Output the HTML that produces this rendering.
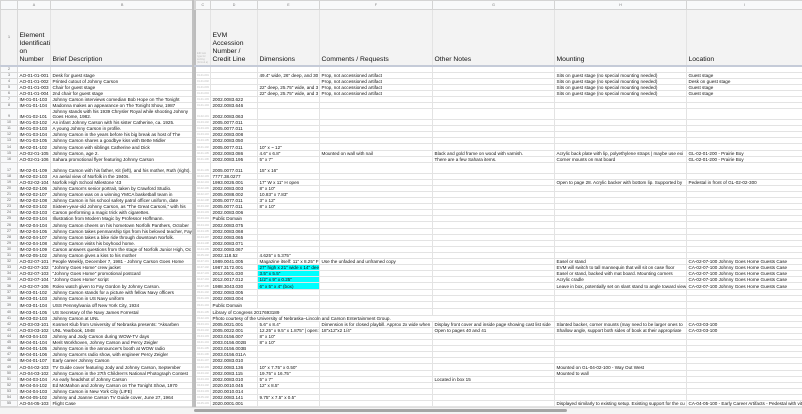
<!DOCTYPE html>
<html><head><meta charset="utf-8"><style>
html,body{margin:0;padding:0;background:#fff;width:802px;height:413px;overflow:hidden;font-family:"Liberation Sans",Arial,sans-serif;}
table{border-collapse:collapse;table-layout:fixed;width:802px;position:absolute;left:0;top:0;}
td{border:1px solid #e3e3e3;padding:0 1.5px;white-space:nowrap;overflow:hidden;font-size:4.6px;line-height:5px;vertical-align:bottom;color:#111;}
td.n{background:#f8f9fa;color:#666;text-align:center;font-size:3.6px;border-color:#d8d8d8;}
td.b{border-right:2px solid #bcbcbc;}
td.c{color:#bbb;font-size:2.6px;}
tr.L td{background:#f8f9fa;color:#777;text-align:center;font-size:3.6px;border-color:#d4d4d4;vertical-align:middle;}
tr.H td{background:#f3f3f3;font-size:6.8px;line-height:8px;white-space:normal;padding-bottom:1px;border-bottom:2px solid #c5cbd8;}
tr.H td.c{font-size:2.6px;line-height:3px;color:#bbb;}
tr.H td.n{font-size:3.6px;vertical-align:middle;}
tr{height:6.1px;}
.w{white-space:normal;}
.cy{background:#00ffff;}
#bar{position:absolute;left:0;top:407px;width:802px;height:6px;background:#f4f4f4;border-top:1px solid #ddd;}
#thumb{position:absolute;left:194px;top:409px;width:373px;height:3px;background:#a5a5a5;border-radius:2px;}
#fz{position:absolute;left:192px;top:0;width:2px;height:413px;background:#c0c0c0;}
</style></head><body>
<table>
<colgroup><col style="width:17px"><col style="width:33px"><col style="width:144px"><col style="width:16px"><col style="width:47px"><col style="width:62px"><col style="width:113px"><col style="width:122px"><col style="width:132px"><col style="width:116px"></colgroup>
<tr class="L" style="height:9px"><td></td><td>A</td><td class="b">B</td><td>C</td><td>D</td><td>E</td><td>F</td><td>G</td><td>H</td><td>I</td></tr>
<tr class="H" style="height:56px"><td class="n">1</td><td>Element Identificati on Number</td><td class="b">Brief Description</td><td class="c">EID w/o type for sorting (formul a)</td><td>EVM Accession Number / Credit Line</td><td>Dimensions</td><td>Comments / Requests</td><td>Other Notes</td><td>Mounting</td><td>Location</td></tr>
<tr style="height:5px"><td class="n">2</td><td></td><td class="b"></td><td></td><td></td><td></td><td></td><td></td><td></td><td></td></tr>
<tr><td class="n">3</td><td>AO-01-01-001</td><td class="b">Desk for guest stage</td><td class="c">01-01-001</td><td></td><td>49.4" wide, 26" deep, and 30</td><td>Prop, not accessioned artifact</td><td></td><td>Sits on guest stage (no special mounting needed)</td><td>Guest stage</td></tr>
<tr><td class="n">4</td><td>AO-01-01-002</td><td class="b">Printed cutout of Johnny Carson</td><td class="c">01-01-002</td><td></td><td></td><td>Prop, not accessioned artifact</td><td></td><td>Sits on guest stage (no special mounting needed)</td><td>Desk on guest stage</td></tr>
<tr><td class="n">5</td><td>AO-01-01-003</td><td class="b">Chair for guest stage</td><td class="c">01-01-003</td><td></td><td>22" deep, 25.75" wide, and 3</td><td>Prop, not accessioned artifact</td><td></td><td>Sits on guest stage (no special mounting needed)</td><td>Guest stage</td></tr>
<tr><td class="n">6</td><td>AO-01-01-004</td><td class="b">2nd chair for guest stage</td><td class="c">01-01-004</td><td></td><td>22" deep, 25.75" wide, and 3</td><td>Prop, not accessioned artifact</td><td></td><td>Sits on guest stage (no special mounting needed)</td><td>Guest stage</td></tr>
<tr><td class="n">7</td><td>IM-01-01-103</td><td class="b">Johnny Carson interviews comedian Bob Hope on The Tonight</td><td class="c">01-01-103</td><td>2002.0083.622</td><td></td><td></td><td></td><td></td><td></td></tr>
<tr><td class="n">8</td><td>IM-01-01-104</td><td class="b">Madonna makes an appearance on The Tonight Show, 1987</td><td class="c">01-01-104</td><td>2002.0083.646</td><td></td><td></td><td></td><td></td><td></td></tr>
<tr style="height:11px"><td class="n">9</td><td>IM-01-02-101</td><td class="b w">Johnny stands with his 1939 Chrysler Royal while shooting Johnny Goes Home, 1982.</td><td class="c">01-02-101</td><td>2002.0083.063</td><td></td><td></td><td></td><td></td><td></td></tr>
<tr><td class="n">10</td><td>IM-01-03-102</td><td class="b">An infant Johnny Carson with his sister Catherine, ca. 1925.</td><td class="c">01-03-102</td><td>2005.0077.011</td><td></td><td></td><td></td><td></td><td></td></tr>
<tr><td class="n">11</td><td>IM-01-03-103</td><td class="b">A young Johnny Carson in profile.</td><td class="c">01-03-103</td><td>2005.0077.011</td><td></td><td></td><td></td><td></td><td></td></tr>
<tr><td class="n">12</td><td>IM-01-03-104</td><td class="b">Johnny Carson in the years before his big break as host of The</td><td class="c">01-03-104</td><td>2002.0083.008</td><td></td><td></td><td></td><td></td><td></td></tr>
<tr><td class="n">13</td><td>IM-01-03-105</td><td class="b">Johnny Carson shares a goodbye kiss with Bette Midler</td><td class="c">01-03-105</td><td>2002.0083.050</td><td></td><td></td><td></td><td></td><td></td></tr>
<tr><td class="n">14</td><td>IM-02-01-102</td><td class="b">Johnny Carson with siblings Catherine and Dick</td><td class="c">02-01-102</td><td>2005.0077.011</td><td>10" x ~ 12"</td><td></td><td></td><td></td><td></td></tr>
<tr><td class="n">15</td><td>AO-02-01-105</td><td class="b">Johnny Carson, age 2.</td><td class="c">02-01-105</td><td>2002.0083.086</td><td>4.6" x 6.8"</td><td>Mounted on wall with nail</td><td>Black and gold frame on wood with varnish.</td><td>Acrylic back plate with lip, polyethylene straps | maybe use exi</td><td>GL-02-01-200 - Prairie Boy</td></tr>
<tr><td class="n">16</td><td>AO-02-01-106</td><td class="b">Sahara promotional flyer featuring Johnny Carson</td><td class="c">02-01-106</td><td>2002.0083.195</td><td>5" x 7"</td><td></td><td>There are a few Sahara items.</td><td>Corner mounts on mat board</td><td>GL-02-01-200 - Prairie Boy</td></tr>
<tr style="height:11px"><td class="n">17</td><td>IM-02-01-109</td><td class="b w">Johnny Carson with his father, Kit (left), and his mother, Ruth (right).</td><td class="c">02-01-109</td><td>2005.0077.011</td><td>15" x 16"</td><td></td><td></td><td></td><td></td></tr>
<tr><td class="n">18</td><td>IM-02-02-103</td><td class="b">An aerial view of Norfolk in the 1940s.</td><td class="c">02-02-103</td><td>7777.38.0277</td><td></td><td></td><td></td><td></td><td></td></tr>
<tr><td class="n">19</td><td>AO-02-02-104</td><td class="b">Norfolk High School Milestone '43</td><td class="c">02-02-104</td><td>1993.0026.001</td><td>17" W x 11" H open</td><td></td><td></td><td>Open to page 28. Acrylic backer with bottom lip. Supported by</td><td>Pedestal in front of GL-02-02-300</td></tr>
<tr><td class="n">20</td><td>IM-02-02-106</td><td class="b">Johnny Carson's senior portrait, taken by Crawford Studio.</td><td class="c">02-02-106</td><td>2002.0083.003</td><td>8" x 10"</td><td></td><td></td><td></td><td></td></tr>
<tr><td class="n">21</td><td>IM-02-02-107</td><td class="b">Johnny Carson was on a winning YMCA basketball team in</td><td class="c">02-02-107</td><td>2005.0088.002</td><td>10.83" x 7.83"</td><td></td><td></td><td></td><td></td></tr>
<tr><td class="n">22</td><td>IM-02-02-108</td><td class="b">Johnny Carson in his school safety patrol officer uniform, date</td><td class="c">02-02-108</td><td>2005.0077.011</td><td>3" x 12"</td><td></td><td></td><td></td><td></td></tr>
<tr><td class="n">23</td><td>IM-02-03-102</td><td class="b">Sixteen-year-old Johnny Carson, as "The Great Carsoni," with his</td><td class="c">02-03-102</td><td>2005.0077.011</td><td>8" x 10"</td><td></td><td></td><td></td><td></td></tr>
<tr><td class="n">24</td><td>IM-02-03-103</td><td class="b">Carson performing a magic trick with cigarettes.</td><td class="c">02-03-103</td><td>2002.0083.006</td><td></td><td></td><td></td><td></td><td></td></tr>
<tr><td class="n">25</td><td>IM-02-03-104</td><td class="b">Illustration from Modern Magic by Professor Hoffmann.</td><td class="c">02-03-104</td><td>Public Domain</td><td></td><td></td><td></td><td></td><td></td></tr>
<tr><td class="n">26</td><td>IM-02-04-104</td><td class="b">Johnny Carson cheers on his hometown Norfolk Panthers, October</td><td class="c">02-04-104</td><td>2002.0083.075</td><td></td><td></td><td></td><td></td><td></td></tr>
<tr><td class="n">27</td><td>IM-02-04-105</td><td class="b">Johnny Carson takes penmanship tips from his beloved teacher, Fay</td><td class="c">02-04-105</td><td>2002.0083.068</td><td></td><td></td><td></td><td></td><td></td></tr>
<tr><td class="n">28</td><td>IM-02-04-107</td><td class="b">Johnny Carson takes a bike ride through downtown Norfolk.</td><td class="c">02-04-107</td><td>2002.0083.065</td><td></td><td></td><td></td><td></td><td></td></tr>
<tr><td class="n">29</td><td>IM-02-04-108</td><td class="b">Johnny Carson visits his boyhood home.</td><td class="c">02-04-108</td><td>2002.0083.071</td><td></td><td></td><td></td><td></td><td></td></tr>
<tr><td class="n">30</td><td>IM-02-04-109</td><td class="b">Carson answers questions from the stage of Norfolk Junior High, Oc</td><td class="c">02-04-109</td><td>2002.0083.067</td><td></td><td></td><td></td><td></td><td></td></tr>
<tr><td class="n">31</td><td>IM-02-05-102</td><td class="b">Johnny Carson gives a kiss to his mother</td><td class="c">02-05-102</td><td>2002.118.52</td><td>4.625" x 5.375"</td><td></td><td></td><td></td><td></td></tr>
<tr><td class="n">32</td><td>AO-02-07-101</td><td class="b">People Weekly, December 7, 1981 - Johnny Carson Goes Home</td><td class="c">02-07-101</td><td>1989.0041.005</td><td>Magazine itself: 11" x 8.25" F</td><td>Use the unfaded and unframed copy</td><td></td><td>Easel or stand</td><td>CA-02-07-100 Johnny Goes Home Guests Case</td></tr>
<tr><td class="n">33</td><td>AO-02-07-102</td><td class="b">"Johnny Goes Home" crew jacket</td><td class="c">02-07-102</td><td>1987.3172.001</td><td class="cy">27" high x 21" wide x 14" deep</td><td></td><td></td><td>EVM will switch to tall mannequin that will sit on case floor</td><td>CA-02-07-100 Johnny Goes Home Guests Case</td></tr>
<tr><td class="n">34</td><td>AO-02-07-103</td><td class="b">"Johnny Goes Home" promotional postcard</td><td class="c">02-07-103</td><td>2012.0001.030</td><td class="cy">3.5" x 5.5"</td><td></td><td></td><td>Easel or stand, backed with mat board. Mounting corners</td><td>CA-02-07-100 Johnny Goes Home Guests Case</td></tr>
<tr><td class="n">35</td><td>AO-02-07-104</td><td class="b">"Johnny Goes Home" script</td><td class="c">02-07-104</td><td>2012.0017.012</td><td class="cy">1/2" x 9" x 0.25"</td><td></td><td></td><td>Acrylic cradle</td><td>CA-02-07-100 Johnny Goes Home Guests Case</td></tr>
<tr><td class="n">36</td><td>AO-02-07-106</td><td class="b">Rolex watch given to Fay Gordon by Johnny Carson.</td><td class="c">02-07-106</td><td>1988.3043.030</td><td class="cy">6" x 5" x 4" (box)</td><td></td><td></td><td>Leave in box, potentially set on slant stand to angle toward view</td><td>CA-02-07-100 Johnny Goes Home Guests Case</td></tr>
<tr><td class="n">37</td><td>IM-03-01-102</td><td class="b">Johnny Carson stands for a picture with fellow Navy officers</td><td class="c">03-01-102</td><td>2002.0083.005</td><td></td><td></td><td></td><td></td><td></td></tr>
<tr><td class="n">38</td><td>IM-03-01-103</td><td class="b">Johnny Carson in US Navy uniform</td><td class="c">03-01-103</td><td>2002.0083.004</td><td></td><td></td><td></td><td></td><td></td></tr>
<tr style="height:7px"><td class="n">39</td><td>IM-03-01-104</td><td class="b">USS Pennsylvania off New York City, 1934</td><td class="c">03-01-104</td><td>Public Domain</td><td></td><td></td><td></td><td></td><td></td></tr>
<tr style="height:7px"><td class="n">40</td><td>IM-03-01-105</td><td class="b">US Secretary of the Navy James Forrestal</td><td class="c">03-01-105</td><td colspan="2">Library of Congress 2017693189</td><td></td><td></td><td></td><td></td></tr>
<tr><td class="n">41</td><td>IM-03-02-103</td><td class="b">Johnny Carson at UNL</td><td class="c">03-02-103</td><td colspan="4">Photo courtesy of the University of Nebraska–Lincoln and Carson Entertainment Group.</td><td></td><td></td></tr>
<tr><td class="n">42</td><td>AO-03-03-101</td><td class="b">Kosmet Klub from University of Nebraska presents: "Aksarben</td><td class="c">03-03-101</td><td>2005.0021.001</td><td>5.6" x 8.4"</td><td>Dimension is for closed playbill. Approx 2x wide when</td><td>Display front cover and inside page showing cast list side</td><td>Slanted backer, corner mounts (may need to be larger ones to</td><td>CA-03-03-100</td></tr>
<tr><td class="n">43</td><td>AO-03-03-102</td><td class="b">UNL Yearbook, 1948</td><td class="c">03-03-102</td><td>2005.0022.001</td><td>12.25" x 9.5" x 1.875" | open:</td><td>18"x12"x2 1/4"</td><td>Open to pages 40 and 41</td><td>Shallow angle, support both sides of book at their appropriate</td><td>CA-03-03-100</td></tr>
<tr><td class="n">44</td><td>IM-03-04-103</td><td class="b">Johnny and Jody Carson during WOW-TV days</td><td class="c">03-04-103</td><td>2003.0156.007</td><td>8" x 10"</td><td></td><td></td><td></td><td></td></tr>
<tr><td class="n">45</td><td>IM-04-01-104</td><td class="b">Merit Workhoven, Johnny Carson and Percy Zeigler</td><td class="c">04-01-104</td><td>2003.0156.002B</td><td>8" x 10"</td><td></td><td></td><td></td><td></td></tr>
<tr><td class="n">46</td><td>IM-04-01-105</td><td class="b">Johnny Carson in the announcer's booth at WOW radio</td><td class="c">04-01-105</td><td>2003.0156.003B</td><td></td><td></td><td></td><td></td><td></td></tr>
<tr><td class="n">47</td><td>IM-04-01-106</td><td class="b">Johnny Carson's radio show, with engineer Percy Zeigler</td><td class="c">04-01-106</td><td>2003.0156.011A</td><td></td><td></td><td></td><td></td><td></td></tr>
<tr><td class="n">48</td><td>IM-04-01-107</td><td class="b">Early career Johnny Carson</td><td class="c">04-01-107</td><td>2002.0083.010</td><td></td><td></td><td></td><td></td><td></td></tr>
<tr><td class="n">49</td><td>AO-04-02-103</td><td class="b">TV Guide cover featuring Jody and Johnny Carson, September</td><td class="c">04-02-103</td><td>2002.0083.136</td><td>10" x 7.75" x 0.50"</td><td></td><td></td><td>Mounted on GL-04-02-100 - Way Out West</td><td></td></tr>
<tr><td class="n">50</td><td>AO-04-03-102</td><td class="b">Johnny Carson in the 27th Children's National Photograph Contest</td><td class="c">04-03-102</td><td>2002.0083.115</td><td>19.75" x 16.75"</td><td></td><td></td><td>Mounted to wall</td><td></td></tr>
<tr><td class="n">51</td><td>IM-04-03-104</td><td class="b">An early headshot of Johnny Carson</td><td class="c">04-03-104</td><td>2002.0083.010</td><td>5" x 7"</td><td></td><td>Located in box 15</td><td></td><td></td></tr>
<tr><td class="n">52</td><td>IM-04-04-102</td><td class="b">Ed McMahon and Johnny Carson on The Tonight Show, 1970</td><td class="c">04-04-102</td><td>2020.0010.045</td><td>12" x 8.5"</td><td></td><td></td><td></td><td></td></tr>
<tr><td class="n">53</td><td>IM-04-04-103</td><td class="b">Johnny Carson in New York City (LIFE)</td><td class="c">04-04-103</td><td>2020.0010.014</td><td></td><td></td><td></td><td></td><td></td></tr>
<tr><td class="n">54</td><td>IM-04-05-102</td><td class="b">Johnny and Joanne Carson TV Guide cover, June 27, 1964</td><td class="c">04-05-102</td><td>2002.0083.141</td><td>9.75" x 7.5" x 0.5"</td><td></td><td></td><td></td><td></td></tr>
<tr><td class="n">55</td><td>AO-04-05-103</td><td class="b">Flight Case</td><td class="c">04-05-103</td><td>2020.0001.001</td><td></td><td></td><td></td><td>Displayed similarly to existing setup. Existing support for the cu</td><td>CA-04-05-100 - Early Career Artifacts - Pedestal with vit</td></tr>
<tr><td class="n">56</td><td>AO-04-05-104</td><td class="b">Lunchbox Pail</td><td class="c">04-05-104</td><td>2020.0001.002</td><td></td><td></td><td></td><td>Displayed similarly to existing setup.</td><td>CA-04-05-100 - Early Career Artifacts</td></tr>
</table>
<div id="fz"></div>
<div id="bar"></div>
<div id="thumb"></div>
</body></html>
